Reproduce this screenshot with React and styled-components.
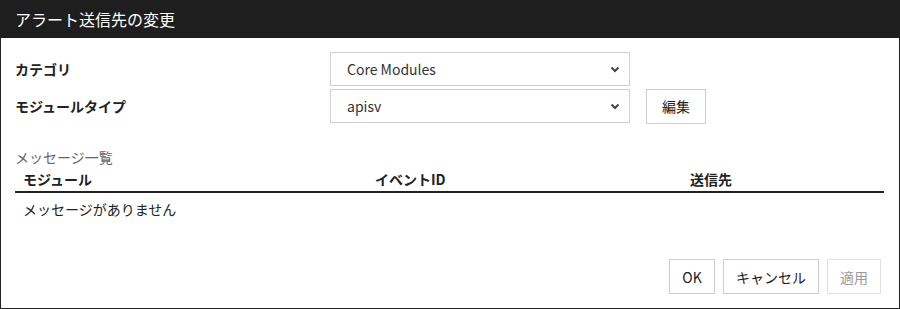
import React from 'react';
import styled, { createGlobalStyle } from 'styled-components';

const Global = createGlobalStyle`
  html, body { margin: 0; padding: 0; background: #fff; }
  body {
    font-family: "Noto Sans CJK JP", "Noto Sans", sans-serif;
    color: #222;
  }
  * { box-sizing: border-box; }
`;

const Dialog = styled.div`
  width: 900px;
  height: 309px;
  border: 1px solid #222;
  border-top: none;
  display: flex;
  flex-direction: column;
  background: #fff;
`;

const Header = styled.div`
  height: 38px;
  background: #1e1e1e;
  color: #fff;
  font-size: 16px;
  line-height: 38px;
  padding-left: 15px;
  margin: 0 -1px;
`;

const Body = styled.div`
  flex: 1;
  padding: 14px 14px 0 14px;
  display: flex;
  flex-direction: column;
`;

const FormRow = styled.div`
  display: flex;
  align-items: center;
  height: 34px;
  margin-bottom: ${p => p.gap || 0}px;
`;

const Label = styled.div`
  width: 315px;
  font-size: 14px;
  font-weight: bold;
`;

const SelectBox = styled.div`
  width: 300px;
  height: 34px;
  border: 1px solid #d0d0d0;
  display: flex;
  align-items: center;
  justify-content: space-between;
  padding: 0 8px 0 16px;
  font-size: 14px;
  color: #333;
`;

const Button = styled.button`
  height: 35px;
  min-width: ${p => p.w || 46}px;
  padding: 0 12px;
  background: #fff;
  border: 1px solid #cfcfcf;
  font-family: inherit;
  font-size: 14px;
  color: ${p => (p.disabled ? '#999' : '#222')};
  border-color: ${p => (p.disabled ? '#e0e0e0' : '#cfcfcf')};
  margin-left: ${p => p.ml || 0}px;
`;

const SectionTitle = styled.div`
  margin-top: 24px;
  font-size: 14px;
  color: #666;
  height: 20px;
  line-height: 20px;
`;

const TableHead = styled.div`
  display: grid;
  grid-template-columns: 352px 315px 1fr;
  height: 26px;
  align-items: center;
  border-bottom: 2px solid #222;
  margin-right: 1px;
  font-size: 14px;
  font-weight: bold;
`;

const Cell = styled.div`
  padding-left: 8px;
`;

const Empty = styled.div`
  padding: 6px 8px;
  font-size: 14px;
`;

const Footer = styled.div`
  margin-top: auto;
  display: flex;
  justify-content: flex-end;
  gap: 8px;
  padding: 0 4px 14px 0;
`;

function Chevron() {
  return (
    <svg width="12" height="12" viewBox="0 0 12 12">
      <path d="M2.5 4.5 L6 8 L9.5 4.5" fill="none" stroke="#444" strokeWidth="2" />
    </svg>
  );
}

export default function App() {
  return (
    <>
      <Global />
      <Dialog>
        <Header>アラート送信先の変更</Header>
        <Body>
          <FormRow gap={3}>
            <Label>カテゴリ</Label>
            <SelectBox>Core Modules<Chevron /></SelectBox>
          </FormRow>
          <FormRow>
            <Label>モジュールタイプ</Label>
            <SelectBox>apisv<Chevron /></SelectBox>
            <Button ml={16} w={60}>編集</Button>
          </FormRow>
          <SectionTitle>メッセージ一覧</SectionTitle>
          <TableHead>
            <Cell>モジュール</Cell>
            <Cell>イベントID</Cell>
            <Cell>送信先</Cell>
          </TableHead>
          <Empty>メッセージがありません</Empty>
          <Footer>
            <Button>OK</Button>
            <Button>キャンセル</Button>
            <Button disabled>適用</Button>
          </Footer>
        </Body>
      </Dialog>
    </>
  );
}
